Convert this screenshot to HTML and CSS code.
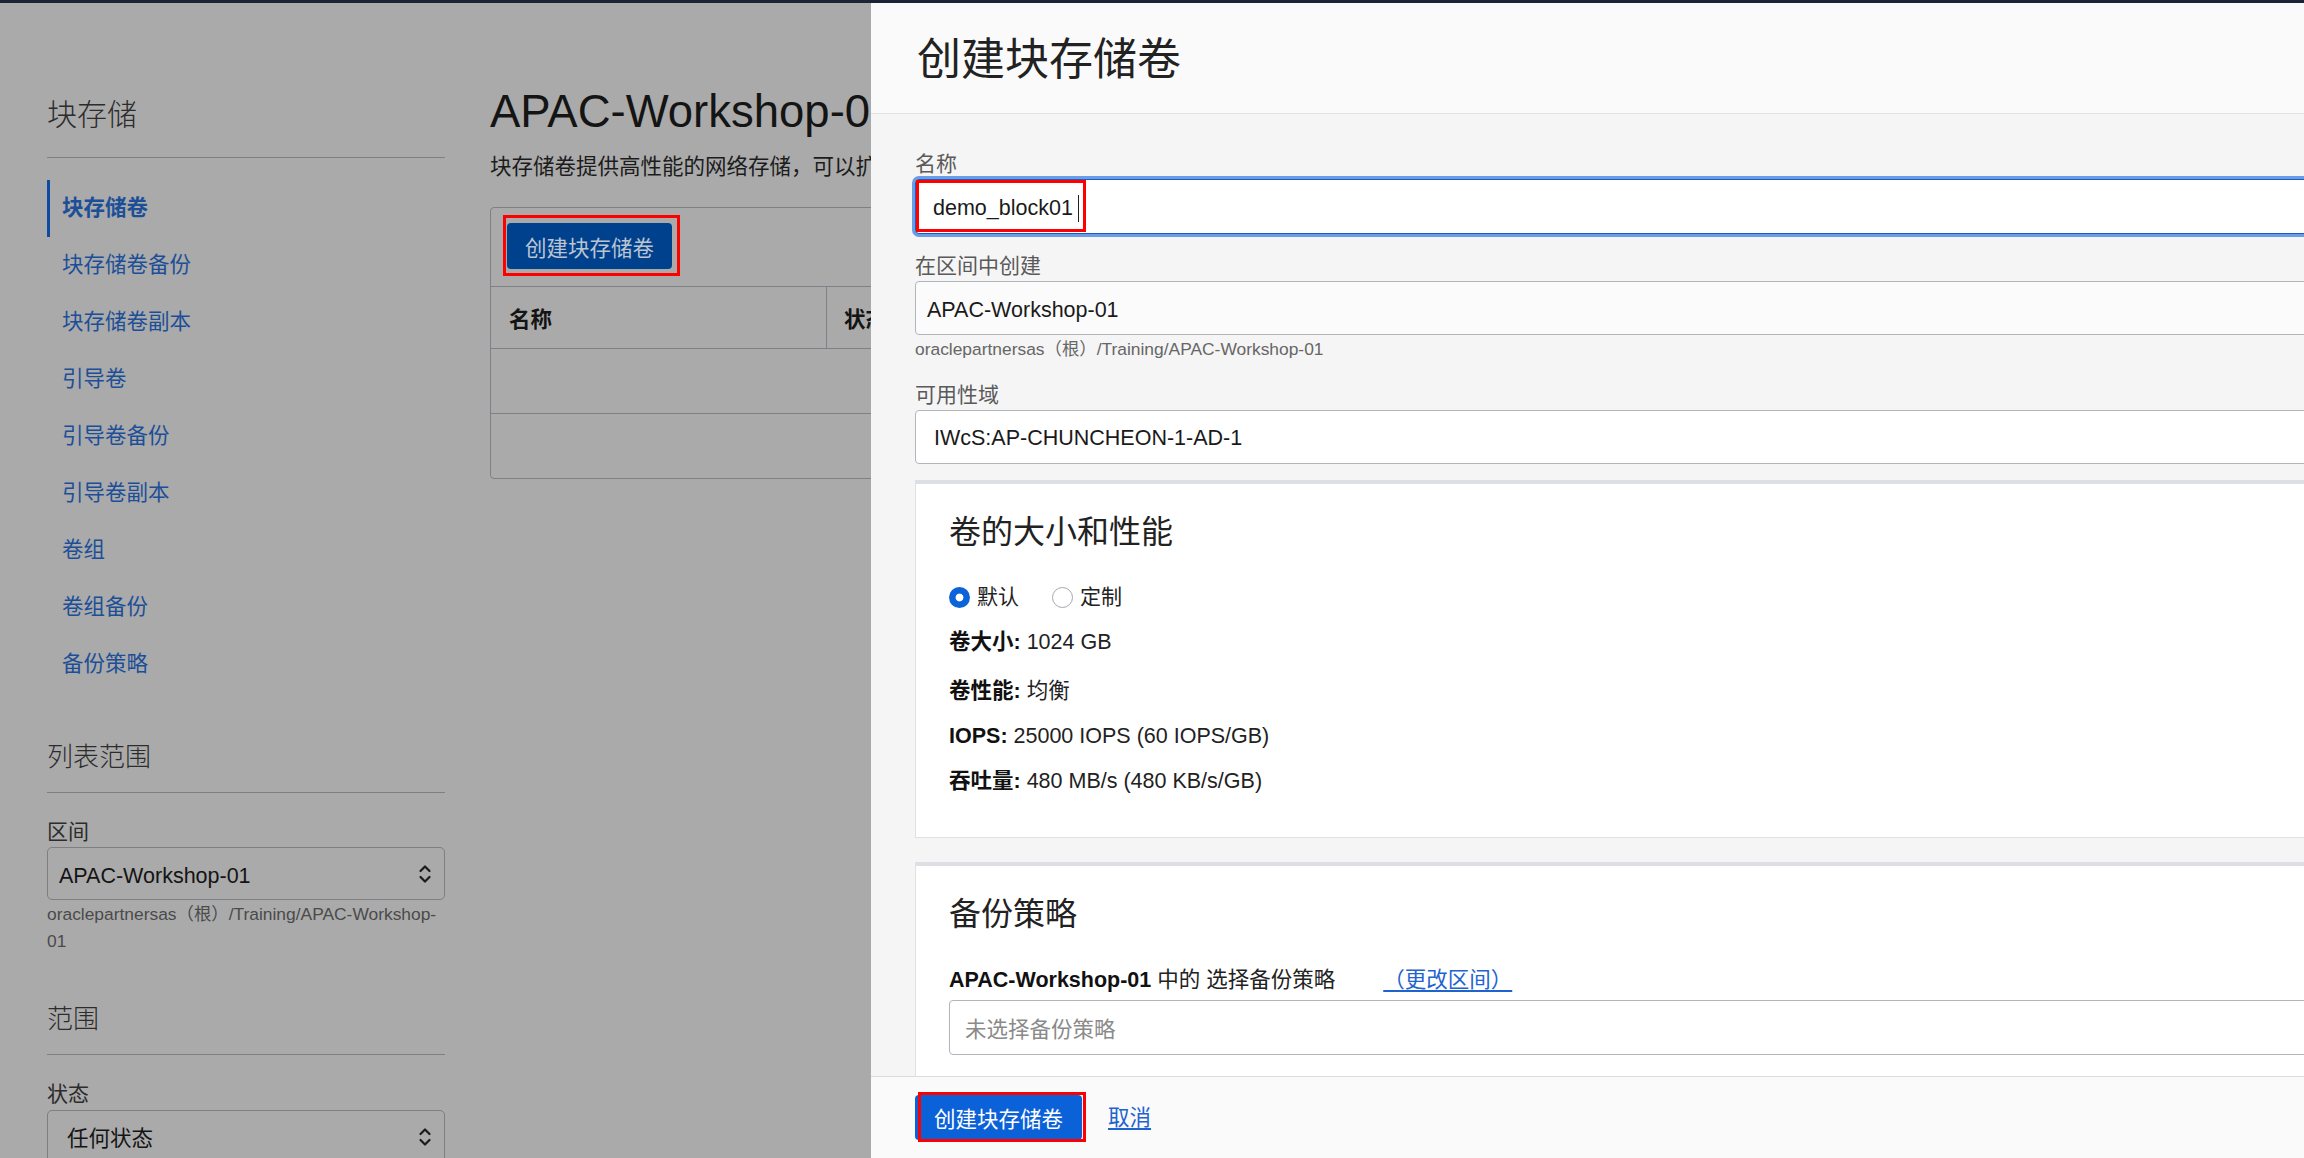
FILE: index.html
```html
<!DOCTYPE html>
<html lang="zh-CN">
<head>
<meta charset="utf-8">
<title>创建块存储卷</title>
<link rel="stylesheet" href="styles.css">
</head>
<body>
<div class="topbar"></div>
<div class="app">
  <aside class="sidebar">
    <h2 class="side-title">块存储</h2>
    <nav class="side-nav">
      <a class="nav-item active">块存储卷</a>
      <a class="nav-item">块存储卷备份</a>
      <a class="nav-item">块存储卷副本</a>
      <a class="nav-item">引导卷</a>
      <a class="nav-item">引导卷备份</a>
      <a class="nav-item">引导卷副本</a>
      <a class="nav-item">卷组</a>
      <a class="nav-item">卷组备份</a>
      <a class="nav-item">备份策略</a>
    </nav>
    <h3 class="side-sub">列表范围</h3>
    <label class="filter-label">区间</label>
    <div class="select select-picker">
      <span>APAC-Workshop-01</span>
      <svg class="chev" width="14" height="22" viewBox="0 0 14 22"><path d="M2.5 8 L7 3.5 L11.5 8 M2.5 14 L7 18.5 L11.5 14" fill="none" stroke="#1a1a1a" stroke-width="2.2" stroke-linecap="round" stroke-linejoin="round"/></svg>
    </div>
    <div class="hint">oraclepartnersas（根）/Training/APAC-Workshop-01</div>
    <h3 class="side-sub">范围</h3>
    <label class="filter-label">状态</label>
    <div class="select select-native">
      <span>任何状态</span>
      <svg class="chev" width="14" height="22" viewBox="0 0 14 22"><path d="M2.5 8 L7 3.5 L11.5 8 M2.5 14 L7 18.5 L11.5 14" fill="none" stroke="#1a1a1a" stroke-width="2.2" stroke-linecap="round" stroke-linejoin="round"/></svg>
    </div>
  </aside>

  <main class="content">
    <h1 class="page-title">APAC-Workshop-01 中的块存储卷</h1>
    <p class="page-desc">块存储卷提供高性能的网络存储，可以扩展实例的存储容量。</p>
    <div class="table-card">
      <div class="toolbar">
        <span class="btn-wrap">
          <button class="btn-dim">创建块存储卷</button>
          <span class="mark mark-main"></span>
        </span>
      </div>
      <div class="thead">
        <div class="th th-name">名称</div>
        <div class="th">状态</div>
      </div>
      <div class="trow"></div>
      <div class="trow last"></div>
    </div>
  </main>
</div>

<section class="drawer">
  <header class="drawer-head">
    <h2 class="drawer-title">创建块存储卷</h2>
  </header>
  <div class="drawer-body">
    <div class="field">
      <label class="field-label">名称</label>
      <div class="input input-focus">
        <span>demo_block01</span><span class="caret"></span>
        <span class="mark mark-input"></span>
      </div>
    </div>
    <div class="field">
      <label class="field-label">在区间中创建</label>
      <div class="input input-picker">APAC-Workshop-01</div>
      <div class="field-hint">oraclepartnersas（根）/Training/APAC-Workshop-01</div>
    </div>
    <div class="field field-ad">
      <label class="field-label">可用性域</label>
      <div class="input input-ad">IWcS:AP-CHUNCHEON-1-AD-1</div>
    </div>

    <div class="card card-size">
      <h3 class="card-title">卷的大小和性能</h3>
      <div class="radio-row">
        <span class="radio on"></span><span class="radio-text">默认</span>
        <span class="radio off"></span><span class="radio-text">定制</span>
      </div>
      <div class="stat stat-1"><b>卷大小:</b> 1024 GB</div>
      <div class="stat stat-2"><b>卷性能:</b> 均衡</div>
      <div class="stat"><b>IOPS:</b> 25000 IOPS (60 IOPS/GB)</div>
      <div class="stat"><b>吞吐量:</b> 480 MB/s (480 KB/s/GB)</div>
    </div>

    <div class="card card-policy">
      <h3 class="card-title">备份策略</h3>
      <div class="policy-label"><b>APAC-Workshop-01</b> 中的 选择备份策略<a class="link change-link">（更改区间）</a></div>
      <div class="input policy-input">未选择备份策略</div>
    </div>
  </div>
  <footer class="drawer-foot">
    <span class="btn-wrap">
      <button class="btn-primary">创建块存储卷</button>
      <span class="mark mark-foot"></span>
    </span>
    <a class="link cancel">取消</a>
  </footer>
</section>
</body>
</html>
```

FILE: styles.css
```css
html, body {
  margin: 0;
  padding: 0;
}
body {
  width: 2304px;
  height: 1158px;
  overflow: hidden;
  position: relative;
  background: #aaaaaa;
  font-family: "Liberation Sans", "Noto Sans CJK SC", sans-serif;
  color: #1a1a1a;
}
.topbar {
  height: 3px;
  background: #1b2433;
}
.app {
  display: flex;
  height: 1155px;
}

/* ---------- sidebar (dimmed) ---------- */
.sidebar {
  flex: none;
  width: 398px;
  margin-left: 47px;
}
.side-title {
  margin: 94px 0 0;
  font-size: 30px;
  line-height: 36px;
  font-weight: 300;
  color: #2c2c2c;
  padding-bottom: 24px;
  border-bottom: 1px solid #7f7f7f;
}
.side-nav {
  margin-top: 22px;
  display: flex;
  flex-direction: column;
}
.nav-item {
  display: block;
  height: 57px;
  line-height: 57px;
  padding-left: 15px;
  font-size: 21.5px;
  color: #1c4f98;
  text-decoration: none;
}
.nav-item.active {
  border-left: 3px solid #0c4aa3;
  padding-left: 12px;
  font-weight: bold;
}
.side-sub {
  margin: 48px 0 0;
  font-size: 26px;
  line-height: 32px;
  font-weight: 300;
  color: #2c2c2c;
  padding-bottom: 19px;
  border-bottom: 1px solid #7f7f7f;
}
.filter-label {
  display: block;
  margin-top: 26px;
  font-size: 21px;
  line-height: 26px;
  color: #2c2c2c;
}
.select {
  margin-top: 2px;
  height: 53px;
  box-sizing: border-box;
  border: 1px solid #7d7f83;
  border-radius: 5px;
  display: flex;
  align-items: center;
  justify-content: space-between;
  padding: 0 12px 0 11px;
  font-size: 21.5px;
  color: #141414;
}
.select-picker {
  padding-top: 6px;
}
.select-picker .chev {
  margin-top: -6px;
}
.select-native {
  margin-top: 3px;
  padding-left: 19px;
}
.chev {
  flex: none;
}
.hint {
  margin-top: 1px;
  font-size: 17.4px;
  line-height: 27px;
  color: #4a4a4a;
}

/* ---------- main content (dimmed) ---------- */
.content {
  flex: 1;
  min-width: 0;
  margin-left: 45px;
}
.page-title {
  margin: 83px 0 0;
  font-size: 45.5px;
  line-height: 52px;
  font-weight: normal;
  color: #141414;
  white-space: nowrap;
}
.page-desc {
  margin: 14px 0 0;
  font-size: 21.5px;
  line-height: 30px;
  color: #1c1c1c;
  white-space: nowrap;
}
.table-card {
  margin-top: 25px;
  width: 1700px;
  border: 1px solid #7d8087;
  border-radius: 4px;
}
.toolbar {
  padding: 15px 16px 17px;
  display: flex;
}
.btn-wrap {
  position: relative;
  display: inline-flex;
}
.btn-dim {
  height: 46px;
  padding: 0 18px;
  border: none;
  border-radius: 4px;
  background: #00418e;
  color: #bcc4d0;
  font-family: inherit;
  font-size: 21.5px;
}
.thead {
  display: flex;
  height: 63px;
  box-sizing: border-box;
  border-top: 1px solid #7d8087;
  border-bottom: 1px solid #7d8087;
}
.th {
  display: flex;
  align-items: center;
  padding-left: 17px;
  font-size: 21.5px;
  font-weight: bold;
  color: #141414;
}
.th-name {
  width: 336px;
  padding-left: 18px;
  box-sizing: border-box;
  border-right: 1px solid #7d8087;
}
.trow {
  height: 65px;
  box-sizing: border-box;
  border-bottom: 1px solid #7d8087;
}
.trow.last {
  height: 64px;
  border-bottom: none;
}

/* ---------- annotation boxes ---------- */
.mark {
  position: absolute;
  border: 3px solid #ff0000;
  pointer-events: none;
}
.mark-main {
  left: -4px;
  top: -8px;
  right: -8px;
  bottom: -7px;
}
.mark-input {
  left: 0;
  top: 0;
  width: 170px;
  height: 52px;
  box-sizing: border-box;
}
.mark-foot {
  left: 3px;
  top: -3px;
  right: -4px;
  bottom: -2px;
}

/* ---------- drawer ---------- */
.drawer {
  position: absolute;
  top: 3px;
  left: 871px;
  right: 0;
  bottom: 0;
  display: flex;
  flex-direction: column;
  background: #f5f5f5;
  overflow: hidden;
}
.drawer-head {
  flex: none;
  height: 111px;
  box-sizing: border-box;
  background: #fafafa;
  border-bottom: 1px solid #e3e3e3;
  display: flex;
  align-items: center;
  padding: 4px 0 0 46px;
}
.drawer-title {
  margin: 0;
  font-size: 44px;
  line-height: 50px;
  font-weight: normal;
  color: #222222;
}
.drawer-body {
  flex: 1;
  min-height: 0;
  overflow: hidden;
  padding: 37px 0 0 44px;
}
.field {
  width: 1600px;
}
.field + .field {
  margin-top: 19px;
}
.field.field-ad {
  margin-top: 21px;
}
.field-label {
  display: block;
  font-size: 21px;
  line-height: 26px;
  color: #5a5a5a;
}
.input {
  position: relative;
  margin-top: 2px;
  height: 54px;
  box-sizing: border-box;
  border: 1px solid #b1b5bc;
  border-radius: 4px;
  background: #ffffff;
  display: flex;
  align-items: center;
  font-size: 21.5px;
  color: #1a1a1a;
  white-space: nowrap;
}
.input-focus {
  height: 55px;
  border-color: #1d5bc0;
  box-shadow: 0 0 0 3px #6a9de5;
  padding: 4px 0 0 17px;
}
.caret {
  display: inline-block;
  width: 1px;
  height: 27px;
  margin-left: 5px;
  background: #222222;
}
.input-picker {
  background: #fbfbfc;
  padding: 4px 0 0 11px;
}
.input-ad {
  padding: 2px 0 0 18px;
}
.field-hint {
  margin-top: 2px;
  font-size: 17.4px;
  line-height: 24px;
  color: #666666;
}

.card {
  width: 1600px;
  box-sizing: border-box;
  background: #ffffff;
  border: 1px solid #e1e1e1;
  border-top: 4px solid #dcdfe3;
  padding: 28px 33px 43px;
}
.card-size {
  margin-top: 16px;
}
.card-policy {
  margin-top: 24px;
  padding-bottom: 30px;
}
.card-title {
  margin: 0;
  font-size: 32px;
  line-height: 40px;
  font-weight: normal;
  color: #222222;
}
.radio-row {
  margin-top: 31px;
  height: 28px;
  display: flex;
  align-items: center;
}
.radio {
  flex: none;
  width: 21px;
  height: 21px;
  box-sizing: border-box;
  border-radius: 50%;
}
.radio.on {
  background: radial-gradient(circle, #ffffff 0 3.5px, #0a64d8 4.3px);
}
.radio.off {
  margin-left: 33px;
  border: 1px solid #a3a8b0;
  background: #ffffff;
}
.radio-text {
  margin-left: 7px;
  font-size: 21px;
  line-height: 28px;
  color: #222222;
}
.stat {
  margin-top: 19px;
  font-size: 21.5px;
  line-height: 26px;
  color: #222222;
  white-space: nowrap;
}
.stat b {
  color: #111111;
}
.stat-1 {
  margin-top: 18px;
}
.stat-2 {
  margin-top: 23px;
}
.policy-label {
  margin-top: 33px;
  font-size: 21.5px;
  line-height: 26px;
  color: #222222;
  white-space: nowrap;
}
.policy-label b {
  color: #111111;
}
.link {
  color: #1f63cf;
  text-decoration: underline;
  text-underline-offset: 3px;
}
.change-link {
  margin-left: 48px;
}
.policy-input {
  margin-top: 7px;
  height: 55px;
  padding-left: 15px;
  color: #8a8a8a;
}

.drawer-foot {
  flex: none;
  height: 82px;
  box-sizing: border-box;
  background: #fafafa;
  border-top: 1px solid #dcdcdc;
  display: flex;
  align-items: center;
  padding-left: 44px;
  gap: 26px;
}
.btn-primary {
  height: 45px;
  padding: 0 19px;
  border: none;
  border-radius: 4px;
  background: #0b61d8;
  color: #ffffff;
  font-family: inherit;
  font-size: 21.5px;
}
.cancel {
  font-size: 21.5px;
  line-height: 26px;
}
```
